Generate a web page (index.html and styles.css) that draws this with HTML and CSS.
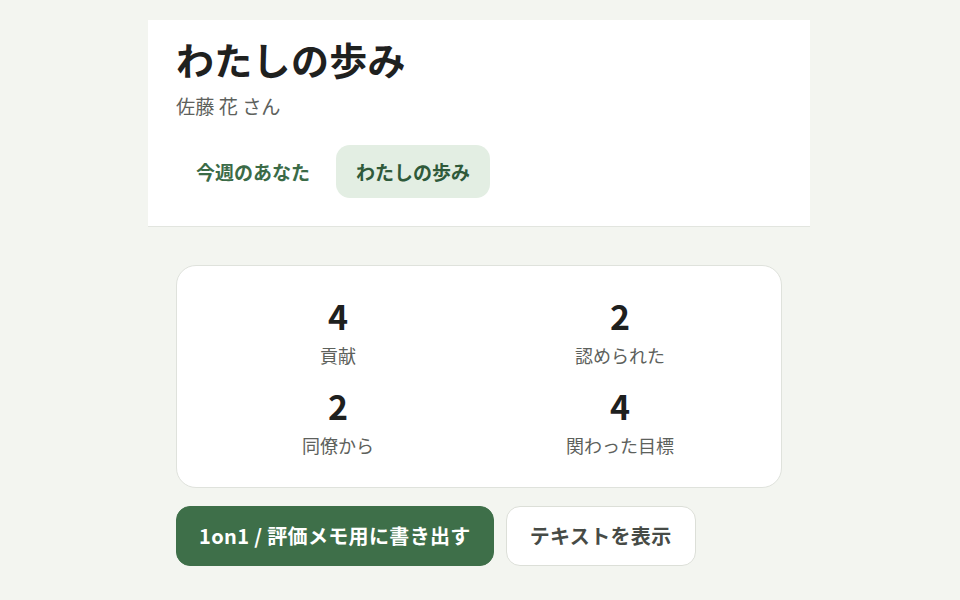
FILE: index.html
```html
<!DOCTYPE html>
<html lang="ja">
<head>
<meta charset="utf-8">
<title>わたしの歩み</title>
<link rel="stylesheet" href="styles.css">
</head>
<body>
<div class="page">
  <header class="header">
    <h1 class="title">わたしの歩み</h1>
    <p class="subtitle">佐藤 花 さん</p>
    <nav class="tabs">
      <a class="tab">今週のあなた</a>
      <a class="tab tab-active">わたしの歩み</a>
    </nav>
  </header>
  <main class="main">
    <section class="card">
      <div class="stat"><div class="num">4</div><div class="label">貢献</div></div>
      <div class="stat"><div class="num">2</div><div class="label">認められた</div></div>
      <div class="stat"><div class="num">2</div><div class="label">同僚から</div></div>
      <div class="stat"><div class="num">4</div><div class="label">関わった目標</div></div>
    </section>
    <div class="actions">
      <button class="btn btn-primary">1on1 / 評価メモ用に書き出す</button>
      <button class="btn btn-secondary">テキストを表示</button>
    </div>
  </main>
</div>
</body>
</html>
```

FILE: styles.css
```css
* { box-sizing: border-box; }
html, body { margin: 0; padding: 0; }
body {
  background: #f3f5f0;
  font-family: "Noto Sans CJK JP", "Noto Sans", sans-serif;
  color: #222;
}
.page {
  width: 662px;
  margin: 0 0 0 148px;
  padding-top: 20px;
}
.header {
  background: #fff;
  padding: 16px 28px 28px;
  border-bottom: 1px solid #e2e5df;
}
.title {
  margin: 0;
  font-size: 38px;
  line-height: 1.2;
  font-weight: 700;
  color: #1f211f;
  letter-spacing: 0.3px;
}
.subtitle {
  margin: 10px 0 0;
  font-size: 19.2px;
  line-height: 1.5;
  color: #5d615c;
}
.tabs {
  display: flex;
  gap: 6px;
  margin-top: 25px;
}
.tab {
  display: block;
  padding: 13px 20px;
  font-size: 19px;
  line-height: 27px;
  height: 53px;
  font-weight: 700;
  color: #3b6b47;
  border-radius: 14px;
}
.tab-active {
  background: #e3eee3;
  color: #2f5a3a;
}
.main {
  padding: 38px 28px 0;
}
.card {
  background: #fff;
  border: 1px solid #dfe2dc;
  border-radius: 20px;
  padding: 30px 24px 28px;
  display: grid;
  grid-template-columns: 1fr 1fr;
  column-gap: 8px;
  row-gap: 17px;
}
.stat {
  text-align: center;
}
.num {
  font-size: 34px;
  line-height: 1.2;
  font-weight: 700;
  color: #1e201e;
}
.label {
  margin-top: 5px;
  font-size: 18px;
  line-height: 27px;
  color: #5d615c;
}
.actions {
  display: flex;
  gap: 12px;
  margin-top: 18px;
}
.btn {
  font-family: inherit;
  font-size: 20px;
  line-height: 28px;
  font-weight: 700;
  height: 60px;
  padding: 0 22px;
  border-radius: 14px;
  letter-spacing: 0.35px;
}
.btn-primary {
  background: #3e6f49;
  color: #fff;
  border: 1px solid #3e6f49;
}
.btn-secondary {
  background: #fff;
  color: #474b46;
  border: 1px solid #dcdfd8;
  padding: 0 23px;
}
```
